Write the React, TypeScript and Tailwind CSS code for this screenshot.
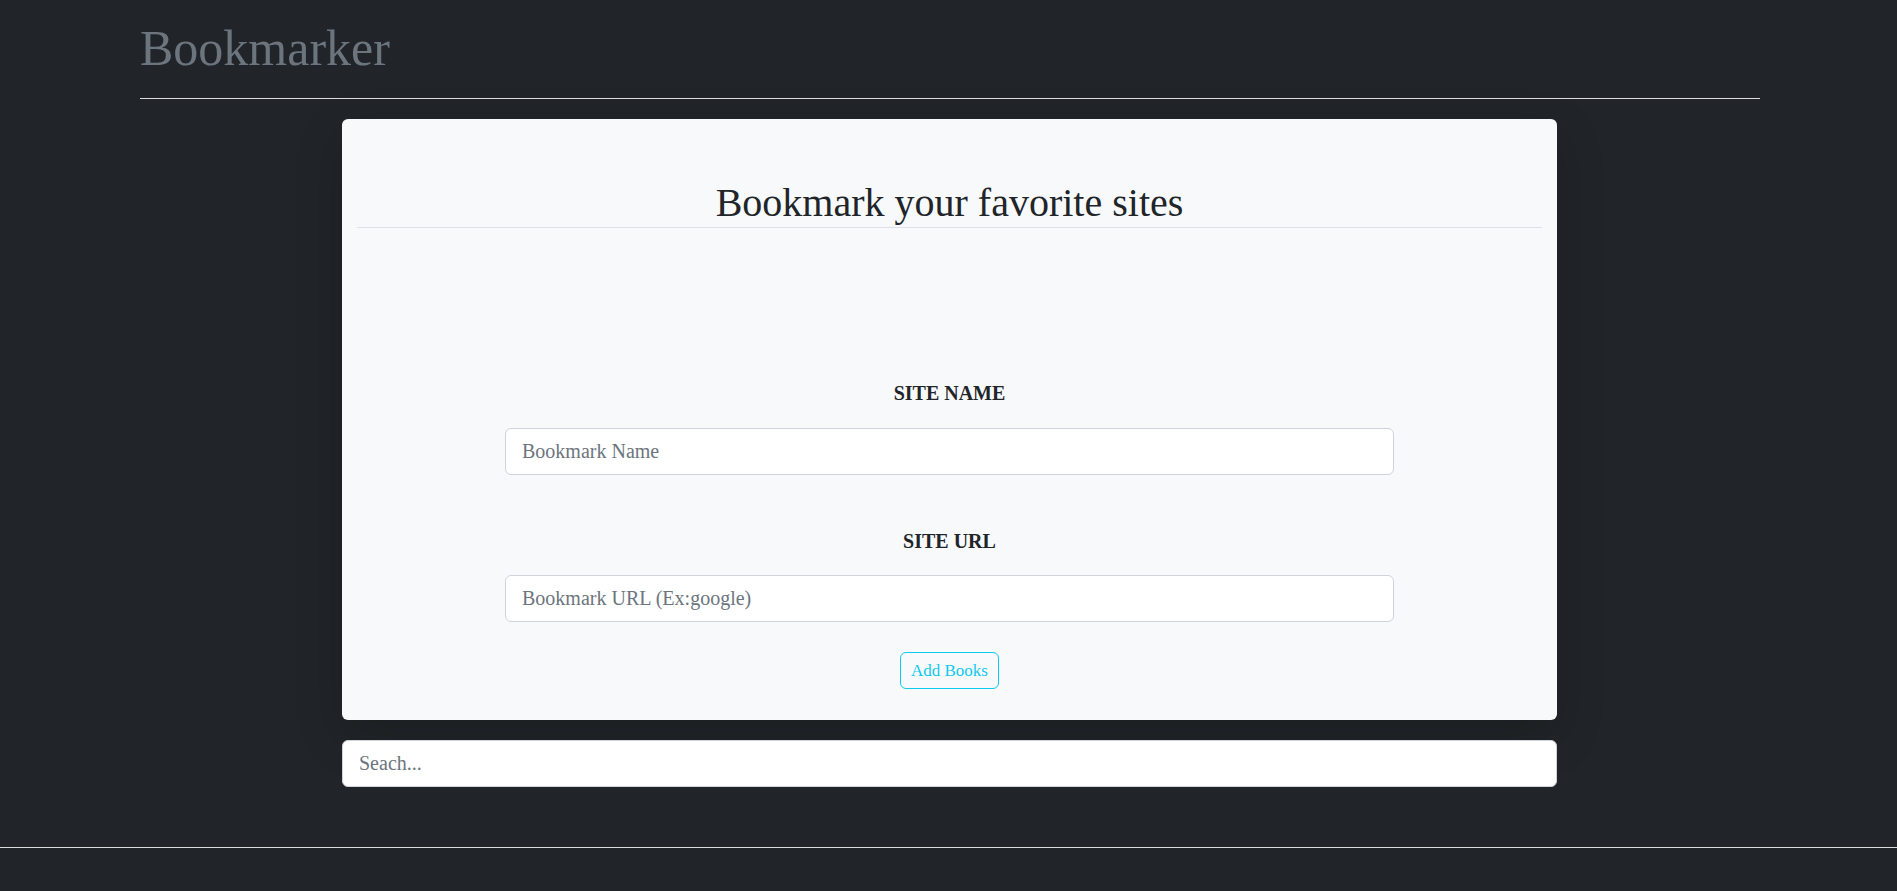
import { useState } from 'react';

const serif = "font-['Liberation_Serif','Times_New_Roman',serif]";

export default function App() {
  const [name, setName] = useState('');
  const [url, setUrl] = useState('');
  const [search, setSearch] = useState('');

  return (
    <div className={`min-h-[891px] bg-[#212529] ${serif} overflow-hidden`}>
      <header className="ml-[140px] w-[1620px] pt-[18px]">
        <h1 className="text-[50px] leading-[60px] text-[#6c757d]">Bookmarker</h1>
        <div className="mt-[20px] border-t border-[#dcdcdc]" />
      </header>

      <main className="ml-[342px] mt-[20px] w-[1215px]">
        <div className="rounded-md bg-[#f8f9fa] pt-[60px] pb-[31px] shadow-[0_16px_48px_rgba(0,0,0,0.2)]">
          <h2 className="text-center text-[40px] leading-[48px] text-[#212529]">Bookmark your favorite sites</h2>
          <div className="mx-[15px] border-t border-[#dee2e6]" />

          <form onSubmit={(e) => e.preventDefault()} className="mx-auto mt-[153px] flex w-[889px] flex-col items-center">
            <label className="text-[20px] font-bold leading-[24px] uppercase text-[#212529]">Site Name</label>
            <input
              value={name}
              onChange={(e) => setName(e.target.value)}
              placeholder="Bookmark Name"
              className="mt-[23px] h-[47px] w-full rounded-md border border-[#ced4da] bg-white px-4 text-[20px] text-[#212529] placeholder:text-[#6c757d] outline-none"
            />
            <label className="mt-[54px] text-[20px] font-bold leading-[24px] uppercase text-[#212529]">Site URL</label>
            <input
              value={url}
              onChange={(e) => setUrl(e.target.value)}
              placeholder="Bookmark URL (Ex:google)"
              className="mt-[22px] h-[47px] w-full rounded-md border border-[#ced4da] bg-white px-4 text-[20px] text-[#212529] placeholder:text-[#6c757d] outline-none"
            />
            <button type="submit" className="mt-[30px] h-[37px] rounded-md border border-[#0dcaf0] px-[10px] text-[17px] text-[#0dcaf0] hover:bg-[#0dcaf0] hover:text-black">
              Add Books
            </button>
          </form>
        </div>

        <input
          value={search}
          onChange={(e) => setSearch(e.target.value)}
          placeholder="Seach..."
          className="mt-[20px] h-[47px] w-full rounded-md border border-[#ced4da] bg-white px-4 text-[20px] text-[#212529] placeholder:text-[#6c757d] outline-none"
        />
      </main>

      <div className="mt-[60px] border-t border-[#dcdcdc]" />
    </div>
  );
}
